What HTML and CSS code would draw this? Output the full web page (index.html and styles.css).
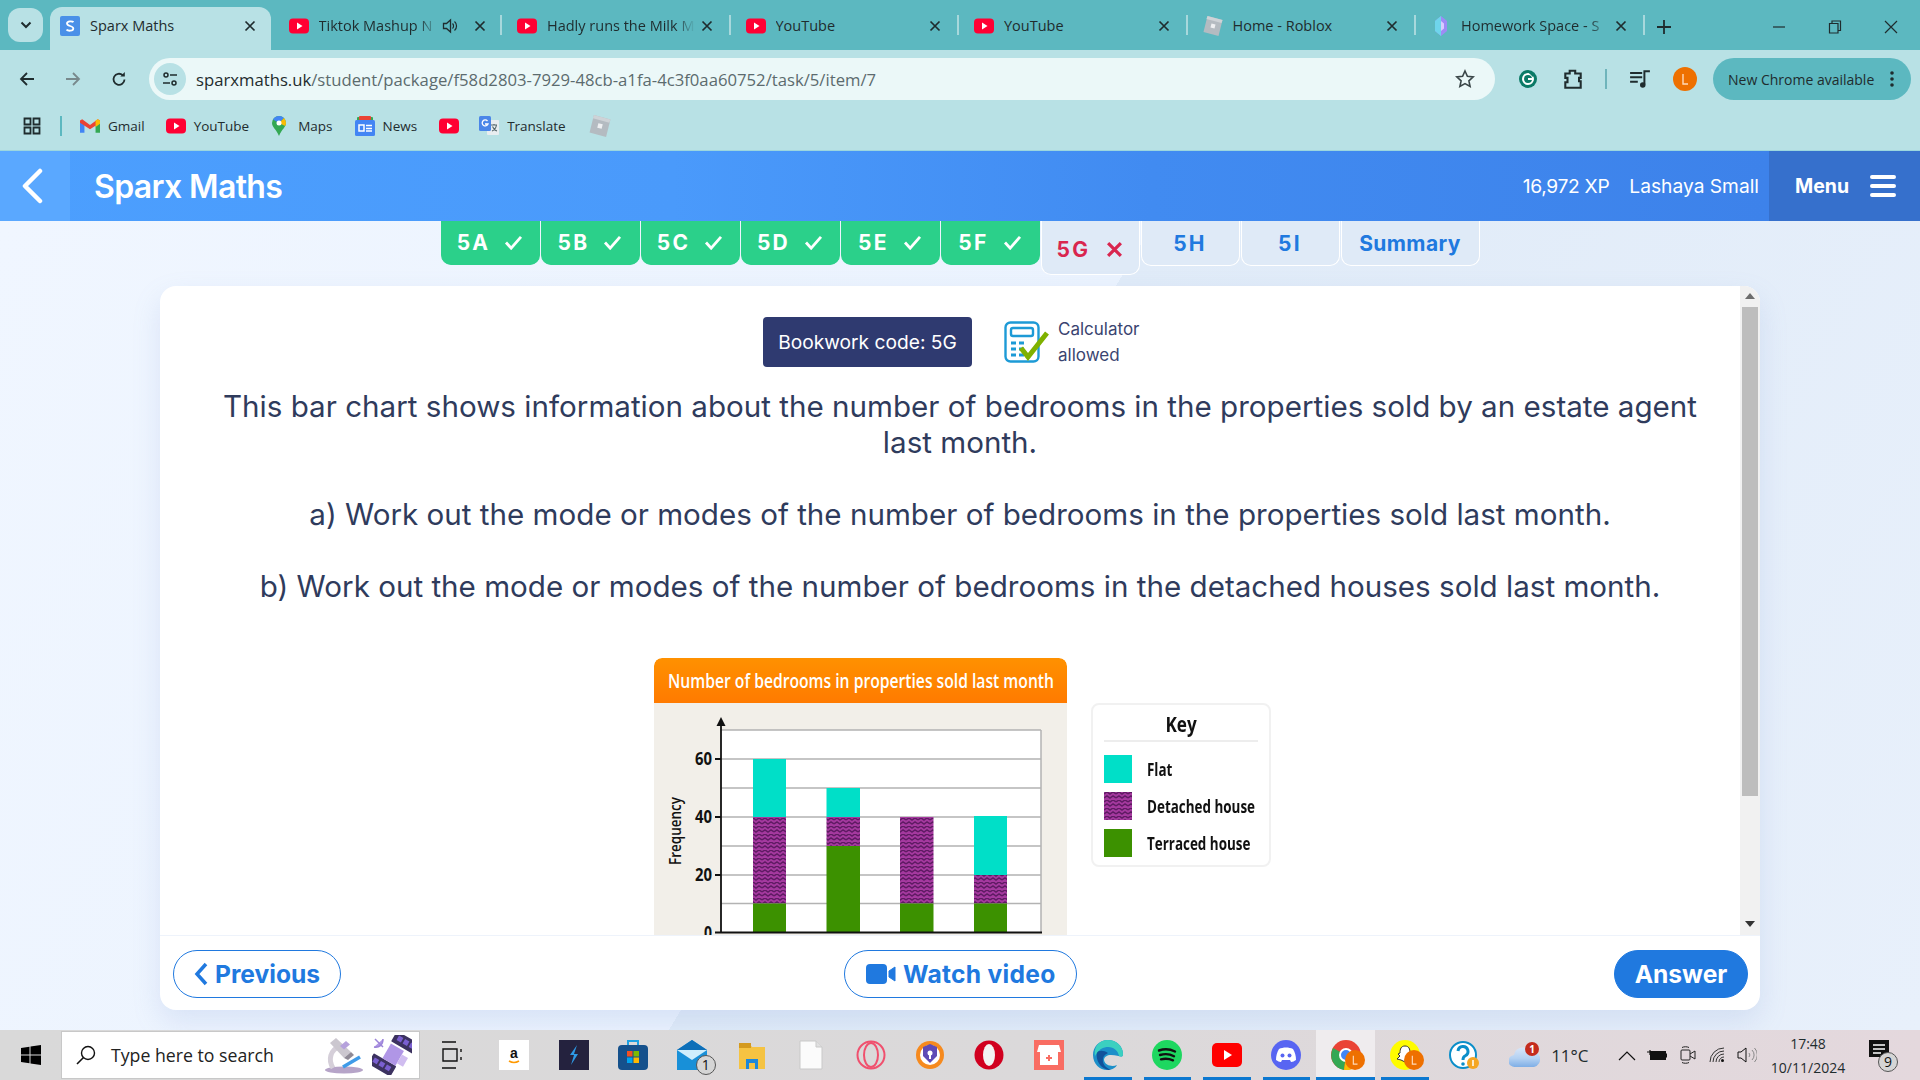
FILE: index.html
```html
<!DOCTYPE html>
<html lang="en">
<head>
<meta charset="utf-8">
<title>Sparx Maths</title>
<link rel="stylesheet" href="styles.css">
</head>
<body>
<svg class="defs" width="0" height="0" aria-hidden="true">
  <defs>
    <symbol id="yt" viewBox="0 0 20 20"><rect y="2.5" width="20" height="15" rx="4" fill="#ff0033"/><path d="M8 6.5l5.5 3.5L8 13.5z" fill="#fff"/></symbol>
    <symbol id="close" viewBox="0 0 12 12"><path d="M1.5 1.5l9 9M10.5 1.5l-9 9" stroke="#1f2c2e" stroke-width="1.7" fill="none"/></symbol>
    <symbol id="roblox" viewBox="0 0 20 20"><path d="M4.500 0l15 4-4 16L.5 16z" fill="#b4bbc1"/><path d="M4.500 0l15 4-1 3-15-4z" fill="#ced3d7"/><path d="M8.500 7.500l4 1-1 4-4-1z" fill="#eef0f2"/></symbol>
    <symbol id="avatar" viewBox="0 0 24 24"><circle cx="12" cy="12" r="12" fill="#ee7000"/><path d="M10 7v10h5" stroke="#ffd9b8" stroke-width="1.4" fill="none"/></symbol>
    <symbol id="tick" viewBox="0 0 20 16"><path d="M2 8l5.500 6L18 2" fill="none" stroke="#fff" stroke-width="3"/></symbol>
    <pattern id="zig" width="12" height="8" patternUnits="userSpaceOnUse"><rect width="12" height="8" fill="#a5399f"/><path d="M0 2l3-2 3 2 3-2 3 2M0 6l3-2 3 2 3-2 3 2" stroke="#5f1a63" stroke-width="1.5" fill="none"/></pattern>
    <linearGradient id="cloud" x1="0" y1="0" x2="0" y2="1"><stop offset="0" stop-color="#d8e6f8"/><stop offset="0.55" stop-color="#b4d1f2"/><stop offset="1" stop-color="#7eaee6"/></linearGradient>
  </defs>
</svg>

<header class="tabstrip">
  <button class="tab-search"><svg width="12" height="8" viewBox="0 0 12 8"><path d="M1.5 1.5L6 6l4.5-4.5" stroke="#1f2c2e" stroke-width="2" fill="none"/></svg></button>
  <div class="tab tab-active">
    <svg class="fav" viewBox="0 0 20 20"><rect width="20" height="20" rx="2" fill="#4a90e8"/><path d="M13.5 6.2C12.5 5 7 4.6 7 7.5c0 3 6.3 2 6.3 5 0 3-5.600 2.500-6.800 1.200" stroke="#fff" stroke-width="1.800" fill="none"/></svg>
    <span class="tab-title">Sparx Maths</span>
    <svg class="tab-x"><use href="#close"/></svg>
  </div>
  <div class="tab tab-audio">
    <svg class="fav"><use href="#yt"/></svg>
    <span class="tab-title">Tiktok Mashup N</span>
    <svg class="tab-sound" viewBox="0 0 16 16"><path d="M1.500 5.500h3L8.500 2v12l-4-3.500h-3z" fill="none" stroke="#1f2c2e" stroke-width="1.300"/><path d="M10.500 5.500a3.500 3.500 0 0 1 0 5M12.500 3.500a6 6 0 0 1 0 9" fill="none" stroke="#1f2c2e" stroke-width="1.200"/></svg>
    <svg class="tab-x"><use href="#close"/></svg>
  </div>
  <div class="tab">
    <svg class="fav"><use href="#yt"/></svg>
    <span class="tab-title">Hadly runs the Milk M</span>
    <svg class="tab-x"><use href="#close"/></svg>
  </div>
  <div class="tab">
    <svg class="fav"><use href="#yt"/></svg>
    <span class="tab-title tab-plain">YouTube</span>
    <svg class="tab-x"><use href="#close"/></svg>
  </div>
  <div class="tab">
    <svg class="fav"><use href="#yt"/></svg>
    <span class="tab-title tab-plain">YouTube</span>
    <svg class="tab-x"><use href="#close"/></svg>
  </div>
  <div class="tab">
    <svg class="fav"><use href="#roblox"/></svg>
    <span class="tab-title tab-plain">Home - Roblox</span>
    <svg class="tab-x"><use href="#close"/></svg>
  </div>
  <div class="tab">
    <svg class="fav" viewBox="0 0 20 20"><path d="M10 0l6 5v10l-6 5-6-5V5z" fill="#9d8bf5"/><path d="M10 0v20L4 15V5z" fill="#6fd5ec"/><path d="M10 5l3 2.500v5L10 15z" fill="#d8ccff"/></svg>
    <span class="tab-title">Homework Space - S</span>
    <svg class="tab-x"><use href="#close"/></svg>
  </div>
  <svg class="new-tab" viewBox="0 0 14 14"><path d="M7 0v14M0 7h14" stroke="#1f2c2e" stroke-width="1.800"/></svg>
  <div class="win-controls">
    <svg viewBox="0 0 14 14"><path d="M1 7h12" stroke="#1f2c2e" stroke-width="1.200"/></svg>
    <svg viewBox="0 0 14 14"><path d="M1.500 3.500h8.500v9.500H1.500zM4 3.500V1h8.500v9.500H10" fill="none" stroke="#1f2c2e" stroke-width="1.200"/></svg>
    <svg viewBox="0 0 14 14"><path d="M1 1l12 12M13 1L1 13" stroke="#1f2c2e" stroke-width="1.200"/></svg>
  </div>
</header>

<div class="toolbar">
  <svg class="nav-ic" viewBox="0 0 16 16"><path d="M15 8H2M8 2L2 8l6 6" fill="none" stroke="#1f2c2e" stroke-width="1.800"/></svg>
  <svg class="nav-ic" viewBox="0 0 16 16"><path d="M1 8h13M8 2l6 6-6 6" fill="none" stroke="#78898c" stroke-width="1.800"/></svg>
  <svg class="nav-ic" viewBox="0 0 16 16"><path d="M13.500 8.500a5.500 5.500 0 1 1-1.800-4.300" fill="none" stroke="#1f2c2e" stroke-width="1.800"/><path d="M13.800 1v4.500H9.300z" fill="#1f2c2e"/></svg>
  <div class="omnibox">
    <span class="site-info"><svg width="16" height="16" viewBox="0 0 16 16"><circle cx="4" cy="4" r="2" fill="none" stroke="#1f2c2e" stroke-width="1.500"/><path d="M8 4h7M1 12h7" stroke="#1f2c2e" stroke-width="1.500"/><circle cx="12" cy="12" r="2" fill="none" stroke="#1f2c2e" stroke-width="1.500"/></svg></span>
    <span class="url"><span class="url-host">sparxmaths.uk</span>/student/package/f58d2803-7929-48cb-a1fa-4c3f0aa60752/task/5/item/7</span>
    <svg class="star" viewBox="0 0 20 20"><path d="M10 2l2.400 5.300 5.800.6-4.300 3.900 1.200 5.700-5.100-2.900-5.100 2.900 1.200-5.700L1.800 7.900l5.800-.6z" fill="none" stroke="#3a4648" stroke-width="1.600"/></svg>
  </div>
  <svg class="tool-g" viewBox="0 0 20 20"><circle cx="10" cy="10" r="9" fill="#0b7a66"/><circle cx="10" cy="10" r="5" fill="none" stroke="#fff" stroke-width="2"/><path d="M10 10h5" stroke="#fff" stroke-width="2"/><path d="M12 3l4 4" stroke="#0b7a66" stroke-width="3"/></svg>
  <svg class="tool-ext" viewBox="0 0 20 20"><path d="M3 5h4V2.500h5V5h5v4h-1.500v3H17v6H3v-5h2V9H3z" fill="none" stroke="#1f2c2e" stroke-width="1.900"/></svg>
  <span class="tool-sep"></span>
  <svg class="tool-media" viewBox="0 0 20 20"><path d="M1 4.500h11M1 8.500h11M1 12.500h7" stroke="#1f2c2e" stroke-width="1.800"/><path d="M14 15V3h5" fill="none" stroke="#1f2c2e" stroke-width="1.800"/><circle cx="12.500" cy="15.500" r="2.500" fill="#1f2c2e"/></svg>
  <svg class="tool-avatar"><use href="#avatar"/></svg>
  <div class="update-pill"><span>New Chrome available</span><svg width="4" height="16" viewBox="0 0 4 16"><circle cx="2" cy="2" r="1.800" fill="#1f2c2e"/><circle cx="2" cy="8" r="1.800" fill="#1f2c2e"/><circle cx="2" cy="14" r="1.800" fill="#1f2c2e"/></svg></div>
</div>

<nav class="bookmarks">
  <svg class="bm-apps" viewBox="0 0 18 18"><path d="M1.500 1.500h6v6h-6zM10.500 1.500h6v6h-6zM1.500 10.500h6v6h-6zM10.500 10.500h6v6h-6z" fill="none" stroke="#1f2c2e" stroke-width="1.800"/></svg>
  <span class="bm-sep"></span>
  <span class="bm"><svg viewBox="0 0 18 14"><path d="M0 3v10h4V6z" fill="#4285f4"/><path d="M18 3v10h-4V6z" fill="#34a853"/><path d="M0 2l2-1 7 5 7-5 2 1v2l-9 6-9-6z" fill="#ea4335"/><path d="M14 2l2-1 2 1v3l-4 3z" fill="#fbbc04"/></svg>Gmail</span>
  <span class="bm bm-yt"><svg><use href="#yt"/></svg>YouTube</span>
  <span class="bm bm-maps"><svg viewBox="0 0 14 20"><path d="M7 0a7 7 0 0 1 7 7c0 4-4 6-7 13-3-7-7-9-7-13a7 7 0 0 1 7-7z" fill="#34a853"/><path d="M1 3.500A7 7 0 0 1 7 0a7 7 0 0 1 5 2L7 7z" fill="#4285f4"/><path d="M12 2a7 7 0 0 1 2 5c0 1-.3 2-.8 3L7 7z" fill="#fbbc04"/><circle cx="7" cy="7" r="2.500" fill="#fff"/></svg>Maps</span>
  <span class="bm bm-news"><svg viewBox="0 0 20 20"><rect x="2" y="1" width="16" height="6" rx="1" fill="#34a853"/><rect x="4" y="0" width="12" height="4" rx="1" fill="#ea4335"/><rect y="4" width="20" height="16" rx="1.500" fill="#4285f4"/><path d="M4 9h5v6H4zM11 9.500h6M11 12.500h6M11 15h6" stroke="#fff" stroke-width="1.500" fill="none"/></svg>News</span>
  <span class="bm bm-only"><svg class="bm-solo"><use href="#yt"/></svg></span>
  <span class="bm"><svg viewBox="0 0 20 20"><rect x="8" y="4" width="12" height="15" rx="1" fill="#e8edf0"/><rect width="12" height="15" rx="1.500" fill="#4a86e8"/><path d="M8.500 5a3 3 0 1 0 .5 3H6" stroke="#fff" stroke-width="1.300" fill="none"/><path d="M12 9h6M15 8v1M13 15c3-1 4-3 4.500-6M13.500 10.500c1 2 2.500 4 4.500 4.500" stroke="#56686c" stroke-width="1.100" fill="none"/></svg>Translate</span>
  <svg class="bm-roblox"><use href="#roblox"/></svg>
</nav>

<header class="app-header">
  <a class="back-btn"><svg width="24" height="36" viewBox="0 0 24 36"><path d="M20 3L5 18l15 15" fill="none" stroke="#fff" stroke-width="4.500" stroke-linecap="round" stroke-linejoin="round"/></svg></a>
  <span class="brand">Sparx Maths</span>
  <span class="xp">16,972 XP</span>
  <span class="user">Lashaya Small</span>
  <div class="menu-btn"><span>Menu</span>
    <svg width="26" height="24" viewBox="0 0 26 24"><path d="M2 3h22M2 12h22M2 21h22" stroke="#fff" stroke-width="4" stroke-linecap="round"/></svg>
  </div>
</header>

<main class="page">
  <div class="task-tabs">
    <div class="ttab ttab-done">5A<svg><use href="#tick"/></svg></div>
    <div class="ttab ttab-done">5B<svg><use href="#tick"/></svg></div>
    <div class="ttab ttab-done">5C<svg><use href="#tick"/></svg></div>
    <div class="ttab ttab-done">5D<svg><use href="#tick"/></svg></div>
    <div class="ttab ttab-done">5E<svg><use href="#tick"/></svg></div>
    <div class="ttab ttab-done">5F<svg><use href="#tick"/></svg></div>
    <div class="ttab ttab-current">5G<svg viewBox="0 0 16 16"><path d="M2 2l12 12M14 2L2 14" fill="none" stroke="#d9264f" stroke-width="3"/></svg></div>
    <div class="ttab">5H</div>
    <div class="ttab">5I</div>
    <div class="ttab ttab-summary">Summary</div>
  </div>

  <section class="card">
    <div class="card-scroll">
      <div class="badges">
        <div class="bookwork">Bookwork code: 5G</div>
        <svg class="calc" viewBox="0 0 45 42"><rect x="1.500" y="1.500" width="33" height="39" rx="5" fill="none" stroke="#1d9ad6" stroke-width="2.400"/><rect x="7" y="7" width="22" height="8" rx="2" fill="none" stroke="#1d9ad6" stroke-width="2.400"/><path d="M7 22h5M15 22h5M7 28h5M15 28h5M7 34h5M15 34h5" stroke="#1d9ad6" stroke-width="2.800"/><path d="M17 27l7 9L43 12" fill="none" stroke="#7fb100" stroke-width="5"/></svg>
        <div class="calc-text">Calculator<br>allowed</div>
      </div>
      <p class="q">This bar chart shows information about the number of bedrooms in the properties sold by an estate agent last month.</p>
      <p class="q">a) Work out the mode or modes of the number of bedrooms in the properties sold last month.</p>
      <p class="q">b) Work out the mode or modes of the number of bedrooms in the detached houses sold last month.</p>

      <div class="figure">
        <svg class="chart" width="413" height="300" viewBox="0 0 413 300">
          <rect y="45" width="413" height="255" fill="#f2efe9"/>
          <defs><linearGradient id="orange" x1="0" y1="0" x2="0" y2="1"><stop offset="0" stop-color="#ff9100"/><stop offset="1" stop-color="#ff7a00"/></linearGradient></defs>
          <path d="M0 45V8a8 8 0 0 1 8-8h397a8 8 0 0 1 8 8v37z" fill="url(#orange)"/>
          <text class="c-title" x="14" y="30" textLength="386" lengthAdjust="spacingAndGlyphs">Number of bedrooms in properties sold last month</text>
          <rect x="67" y="72" width="320" height="202" fill="#fff"/>
          <path class="c-grid" d="M67 72h320M67 101h320M67 130h320M67 159h320M67 188h320M67 217h320M67 245.500h320M387 72v202"/>
          <rect x="99" y="101" width="33" height="58" fill="#00dfc8"/><rect x="99" y="159" width="33" height="86.500" fill="url(#zig)"/><rect x="99" y="245.500" width="33" height="29" fill="#3c9100"/>
          <rect x="172.500" y="130" width="33.500" height="29" fill="#00dfc8"/><rect x="172.500" y="159" width="33.500" height="29" fill="url(#zig)"/><rect x="172.500" y="188" width="33.500" height="86.500" fill="#3c9100"/>
          <rect x="246" y="159" width="33.500" height="86.500" fill="url(#zig)"/><rect x="246" y="245.500" width="33.500" height="29" fill="#3c9100"/>
          <rect x="320" y="158" width="33" height="59" fill="#00dfc8"/><rect x="320" y="217" width="33" height="28.500" fill="url(#zig)"/><rect x="320" y="245.500" width="33" height="29" fill="#3c9100"/>
          <path class="c-axis" d="M67 66v208.500h321M61 101h6M61 159h6M61 217h6M61 274.500h6"/>
          <path d="M67 59l-4.500 9h9z" fill="#111"/>
          <text class="c-tick" x="58" y="107" text-anchor="end" textLength="17" lengthAdjust="spacingAndGlyphs">60</text>
          <text class="c-tick" x="58" y="165" text-anchor="end" textLength="17" lengthAdjust="spacingAndGlyphs">40</text>
          <text class="c-tick" x="58" y="223" text-anchor="end" textLength="17" lengthAdjust="spacingAndGlyphs">20</text>
          <text class="c-tick" x="58" y="281" text-anchor="end" textLength="8" lengthAdjust="spacingAndGlyphs">0</text>
          <text class="c-axis-label" transform="translate(27 207) rotate(-90)" textLength="68" lengthAdjust="spacingAndGlyphs">Frequency</text>
        </svg>
        <aside class="key">
          <div class="key-title"><span class="key-title-text">Key</span></div>
          <div class="key-row"><span class="swatch swatch-flat"></span><span class="key-label">Flat</span></div>
          <div class="key-row"><svg class="swatch" viewBox="0 0 28 28"><rect width="28" height="28" fill="url(#zig)"/></svg><span class="key-label">Detached house</span></div>
          <div class="key-row"><span class="swatch swatch-terr"></span><span class="key-label">Terraced house</span></div>
        </aside>
      </div>

      <div class="scrollbar">
        <svg width="10" height="6" viewBox="0 0 10 6"><path d="M5 0l5 6H0z" fill="#6d6d6d"/></svg>
        <span class="thumb"></span>
        <svg width="10" height="6" viewBox="0 0 10 6"><path d="M5 6L0 0h10z" fill="#333"/></svg>
      </div>
    </div>
    <footer class="card-foot">
      <a class="btn btn-prev"><svg width="14" height="24" viewBox="0 0 14 24"><path d="M12 2L3 12l9 10" fill="none" stroke="#2079df" stroke-width="3.500"/></svg>Previous</a>
      <a class="btn btn-video"><svg width="30" height="20" viewBox="0 0 30 20"><rect width="21" height="20" rx="4" fill="#2079df"/><path d="M23 7l6-4v14l-6-4z" fill="#2079df" stroke="#2079df" stroke-linejoin="round"/></svg>Watch video</a>
      <a class="btn btn-answer">Answer</a>
    </footer>
  </section>
</main>

<footer class="taskbar">
  <div class="tb-start"><svg width="20" height="20" viewBox="0 0 20 20"><path d="M0 3l8.500-1.300V9.500H0zM9.500 1.500L20 0v9.500H9.500zM0 10.500h8.500v7.800L0 17zM9.500 10.500H20V20L9.500 18.500z" fill="#000"/></svg></div>
  <div class="tb-search">
    <svg class="tb-mag" viewBox="0 0 20 20"><circle cx="12" cy="8" r="6.500" fill="none" stroke="#111" stroke-width="1.400"/><path d="M7.500 12.500L1 19" stroke="#111" stroke-width="1.600"/></svg>
    <span class="tb-search-text">Type here to search</span>
    <svg class="tb-art" viewBox="0 0 40 40"><ellipse cx="19" cy="35" rx="19" ry="3.500" fill="#b6a4c8"/><path d="M8 33C3 25 5 15 15 11" fill="none" stroke="#d5cfd9" stroke-width="5"/><path d="M5 8l6-5 15 14-7 6z" fill="#cbc7cf"/><path d="M15 11l6-5 4 3.500-6 5z" fill="#b6a2dc"/><path d="M19 23l7-6 3 3-6 5z" fill="#8f8a96"/><path d="M18 32l17-10" stroke="#3f9be8" stroke-width="3.500"/></svg>
    <svg class="tb-art" viewBox="0 0 40 40"><g transform="rotate(30 21 19)"><rect x="9" y="-4" width="26" height="12" rx="1" fill="#3c3260" transform="translate(4 1)"/><rect x="7" y="29" width="26" height="12" rx="1" fill="#3c3260" transform="translate(-3 -1)"/><rect x="14" y="11" width="15" height="17" fill="#b096e6"/><rect x="29" y="15" width="7" height="10" fill="#d0bdf0"/><g fill="#7a5fd0"><rect x="17" y="0" width="5" height="5"/><rect x="24" y="0" width="5" height="5"/><rect x="31" y="0" width="5" height="5"/><rect x="7" y="31" width="5" height="5"/><rect x="14" y="31" width="5" height="5"/><rect x="21" y="31" width="5" height="5"/></g></g><path d="M3 4l8 8M2 12c5 1 9-2 9-8" fill="#b096e6" stroke="#9c84d8" stroke-width="1.500"/></svg>
  </div>
  <div class="tb-cell tb-taskview"><svg width="20" height="30" viewBox="0 0 20 30"><path d="M0 2h14M0 28h14M1 9h14v12H1zM19 9v3M19 17v3" fill="none" stroke="#111" stroke-width="1.400"/></svg></div>
  <div class="tb-cell"><svg class="tb-ic" viewBox="0 0 30 30"><rect width="30" height="30" fill="#fff"/><text class="amz" x="15" y="18" text-anchor="middle">a</text><path d="M10 21q5 3 10 0" stroke="#f90" stroke-width="1.500" fill="none"/></svg></div>
  <div class="tb-cell"><svg class="tb-ic" viewBox="0 0 30 30"><rect width="30" height="30" fill="#24223e"/><path d="M18 5l-7 10h4l-3 10 7-11h-4z" fill="#2e9ae6"/></svg></div>
  <div class="tb-cell"><svg class="tb-ic" viewBox="0 0 30 30"><path d="M10 5V1h10v4" fill="none" stroke="#1da1e2" stroke-width="2"/><rect y="5" width="30" height="25" rx="4" fill="#15518c"/><rect x="9" y="11" width="5.500" height="5.500" fill="#f25022"/><rect x="15.500" y="11" width="5.500" height="5.500" fill="#7fba00"/><rect x="9" y="17.500" width="5.500" height="5.500" fill="#00a4ef"/><rect x="15.500" y="17.500" width="5.500" height="5.500" fill="#ffb900"/></svg></div>
  <div class="tb-cell tb-badged"><svg class="tb-ic" viewBox="0 0 30 30"><path d="M0 10L15 0l15 10v20H0z" fill="#1890d8"/><path d="M0 10l15 10 15-10-15-3z" fill="#cfeefc"/><path d="M15 0L0 10h30z" fill="#0e6fb8"/></svg><span class="count">1</span></div>
  <div class="tb-cell"><svg class="tb-ic" viewBox="0 0 30 30"><path d="M2 3h10l3 4h13v22H2z" fill="#f5c342"/><path d="M2 3h12v5H2z" fill="#d49a1e"/><path d="M9 19h12v10h-3v-6h-6v6H9z" fill="#1e88d8"/></svg></div>
  <div class="tb-cell"><svg class="tb-ic" viewBox="0 0 30 30"><path d="M4 1h16l6 6v22H4z" fill="#fbfbfb" stroke="#c9c9c9"/><path d="M20 1v6h6" fill="#e0e0e0" stroke="#c9c9c9"/></svg></div>
  <div class="tb-cell"><svg class="tb-ic" viewBox="0 0 30 30"><circle cx="15" cy="15" r="13.500" fill="none" stroke="#f0506e" stroke-width="2"/><ellipse cx="15" cy="15" rx="7" ry="12" fill="none" stroke="#f0506e" stroke-width="2"/></svg></div>
  <div class="tb-cell"><svg class="tb-ic" viewBox="0 0 30 30"><circle cx="15" cy="15" r="14" fill="#f68a1e"/><circle cx="15" cy="15" r="10" fill="#fff"/><path d="M8 7l7-3 7 3v9l-7 7-7-7z" fill="#5f4bb6"/><circle cx="15" cy="13" r="2.500" fill="#fff"/><path d="M15 14v5" stroke="#fff" stroke-width="2"/></svg></div>
  <div class="tb-cell"><svg class="tb-ic" viewBox="0 0 30 30"><circle cx="15" cy="15" r="14.500" fill="#d1001f"/><ellipse cx="15" cy="15" rx="6" ry="11" fill="#f2f2f2"/></svg></div>
  <div class="tb-cell"><svg class="tb-ic" viewBox="0 0 30 30"><rect width="30" height="30" fill="#f96d63"/><path d="M5 5h20l2 7H3z" fill="#fff"/><rect x="6" y="12" width="18" height="13" fill="#fff"/><path d="M15 15v6M12 18h6" stroke="#f96d63" stroke-width="2"/></svg></div>
  <div class="tb-cell tb-on"><svg class="tb-ic" viewBox="0 0 30 30"><path d="M15 0C6 0 0 7 0 15c0 9 7 15 14 15 6 0 9-3 10-5-4 2-12 1-13-5 0-3 3-5 7-5 8 0 12 4 12-1C30 6 23 0 15 0z" fill="#1c8fc9"/><path d="M15 0C23 0 30 6 30 14c0 3-2 3-4 2-1-7-9-12-18-7-2 1-6 6-6 8C0 7 6 0 15 0z" fill="#3bd0c0"/><path d="M4 13c-2 9 6 18 14 17-5-2-9-6-8-11 0-3 3-5 5-6-4-3-10-3-11 0z" fill="#12529b"/></svg></div>
  <div class="tb-cell tb-on"><svg class="tb-ic" viewBox="0 0 30 30"><circle cx="15" cy="15" r="15" fill="#1ed760"/><path d="M7 10.500c6-2 11-1.500 16 1M8 15c5-1.500 10-1 14 1.200M9 19.300c4-1 8-.8 12 1" fill="none" stroke="#111" stroke-width="2.400" stroke-linecap="round"/></svg></div>
  <div class="tb-cell tb-on"><svg class="tb-ic" viewBox="0 0 30 30"><rect y="3" width="30" height="24" rx="5" fill="#f00"/><path d="M12 10l8 5-8 5z" fill="#fff"/></svg></div>
  <div class="tb-cell tb-on"><svg class="tb-ic" viewBox="0 0 30 30"><circle cx="15" cy="15" r="15" fill="#5865f2"/><path d="M8 9c4-2 10-2 14 0 2 3 3 7 3 11-2 1-3 2-5 2l-1-2h-8l-1 2c-2 0-3-1-5-2 0-4 1-8 3-11z" fill="#fff"/><circle cx="11.500" cy="15.500" r="2" fill="#5865f2"/><circle cx="18.500" cy="15.500" r="2" fill="#5865f2"/></svg></div>
  <div class="tb-cell tb-on tb-active tb-badged">
    <svg class="tb-ic" viewBox="0 0 30 30"><circle cx="15" cy="15" r="15" fill="#ea4335"/><path d="M15 15L2 8a15 15 0 0 0 11 22z" fill="#34a853"/><path d="M15 15l15-2a15 15 0 0 1-17 17z" fill="#fbbc04"/><circle cx="15" cy="15" r="6" fill="#4285f4" stroke="#fff" stroke-width="2"/></svg>
    <svg class="tb-avatar"><use href="#avatar"/></svg>
  </div>
  <div class="tb-cell tb-on tb-badged">
    <svg class="tb-ic" viewBox="0 0 30 30"><circle cx="15" cy="15" r="15" fill="#fffc00"/><path d="M15 6c4 0 5 3 5 7l2 1-2 2 3 3-4 1-4 2-4-2-4-1 3-3-2-2 2-1c0-4 1-7 5-7z" fill="#fff" stroke="#333"/></svg>
    <svg class="tb-avatar"><use href="#avatar"/></svg>
  </div>
  <div class="tb-cell"><svg class="tb-ic" viewBox="0 0 30 30"><circle cx="14" cy="15" r="13" fill="#fff" stroke="#0b8ec9" stroke-width="2"/><path d="M9 11a5 5 0 1 1 7 5c-2 1-2 2-2 4" fill="none" stroke="#0b8ec9" stroke-width="3"/><circle cx="14" cy="24" r="1.800" fill="#0b8ec9"/><circle cx="24" cy="23" r="6" fill="#f5a623"/><path d="M24 20v6" stroke="#fff" stroke-width="1.500"/></svg></div>
  <div class="tb-weather">
    <svg width="31" height="26" viewBox="0 0 31 26"><path d="M6 25a6 6 0 0 1-1-12 9 9 0 0 1 16-4 8 8 0 0 1 4 16z" fill="url(#cloud)"/><circle cx="23" cy="7" r="7" fill="#c42b1c"/><text class="wx-badge" x="23" y="11" text-anchor="middle">1</text></svg>
    <span>11°C</span>
  </div>
  <div class="tb-tray">
    <svg viewBox="0 0 20 20"><path d="M2 15l8-8 8 8" fill="none" stroke="#111" stroke-width="1.200"/></svg>
    <svg viewBox="0 0 20 20"><path d="M0 7h3M3 5v4M3 7v3" stroke="#111" stroke-width="1.200"/><rect x="3" y="6" width="16" height="9" fill="#111"/><rect x="19" y="8.500" width="1" height="4" fill="#111"/></svg>
    <svg viewBox="0 0 20 20"><rect x="4" y="5" width="9" height="10" rx="1" fill="none" stroke="#222"/><path d="M5 2.500c2-1 5-1 7 0M5 17.500c2 1 5 1 7 0M13 9l5-3v8l-5-3" fill="none" stroke="#222"/></svg>
    <svg viewBox="0 0 20 20"><path d="M3 17a14 14 0 0 1 14-14M6 17a11 11 0 0 1 11-11M9 17a8 8 0 0 1 8-8M12 17a5 5 0 0 1 5-5" fill="none" stroke="#333" stroke-width="1"/><circle cx="15.500" cy="15.500" r="1.500" fill="#111"/></svg>
    <svg viewBox="0 0 20 20"><path d="M1 7h3l5-4v14l-5-4H1z" fill="none" stroke="#111"/><path d="M12 8a3 3 0 0 1 0 4M15 5a7 7 0 0 1 0 10M17.500 3a10 10 0 0 1 0 14" fill="none" stroke="#888"/></svg>
  </div>
  <div class="tb-clock"><span>17:48</span><span>10/11/2024</span></div>
  <div class="tb-notify"><svg width="20" height="20" viewBox="0 0 20 20"><path d="M0 0h20v17h-5l-2 3-2-3H0z" fill="#111"/><path d="M4 5h12M4 9h12M4 13h8" stroke="#fff" stroke-width="1.300"/></svg><span class="count">9</span></div>
</footer>
</body>
</html>
```

FILE: styles.css
```css
* { box-sizing: border-box; }
html, body { margin: 0; height: 1080px; overflow: hidden; }
body { width: 1920px; display: flex; flex-direction: column; font-family: "Open Sans", "Noto Sans", sans-serif; color: #1f2c2e; background: #fff; }
svg { display: block; flex: none; }
.defs { position: absolute; }

/* Browser tab strip */
.tabstrip { height: 50px; flex: none; display: flex; align-items: flex-end; padding-left: 8px; background: #5cb8c0; position: relative; }
.tab-search { width: 35px; height: 34px; margin: 0 7px 8px 0; padding: 0; border: 0; border-radius: 12px; background: #b8e1e5; display: flex; align-items: center; justify-content: center; }
.tab { width: 228.5px; height: 43px; display: flex; align-items: center; padding: 0 18px 6px 13px; border-right: 2px solid transparent; position: relative; }
.tab::after { content: ""; position: absolute; right: 0; top: 8px; height: 20px; width: 2px; background: #a8d8dc; }
.tab-audio { padding-right: 16px; }
.tab-active { width: 221px; margin-right: 4.500px; padding: 0 13px 6px 10px; background: #b8e1e5; border-radius: 12px 12px 0 0; }
.tab-active::after { display: none; }
.fav { width: 20px; height: 20px; margin-right: 10px; }
.tab-title { flex: 1; min-width: 0; font-size: 14.500px; white-space: nowrap; overflow: hidden; -webkit-mask-image: linear-gradient(to left, transparent 0, #000 20px); mask-image: linear-gradient(to left, transparent 0, #000 20px); }
.tab-active .tab-title, .tab-plain { -webkit-mask-image: none; mask-image: none; }
.tab-sound { width: 16px; height: 16px; margin: 0 10px 0 4px; }
.tab-x { width: 12px; height: 12px; margin-left: 6px; }
.new-tab { width: 14px; height: 14px; margin: 0 0 16px 10px; }
.win-controls { margin-left: auto; display: flex; gap: 42px; padding: 0 22px 16px 0; }
.win-controls svg { width: 14px; height: 14px; }

/* Toolbar */
.toolbar { height: 58px; flex: none; display: flex; align-items: center; padding: 0 8px 0 19px; background: #b8e1e5; }
.nav-ic { width: 16px; height: 16px; margin-right: 30px; }
.omnibox { width: 1346px; height: 42px; margin-left: -8px; border-radius: 21px; background: #ebf8f8; display: flex; align-items: center; padding: 0 20px 0 5px; }
.site-info { width: 32px; height: 32px; border-radius: 50%; background: #b8e1e5; display: flex; align-items: center; justify-content: center; margin-right: 10px; }
.url { flex: 1; font-size: 16.700px; color: #5c6b6e; white-space: nowrap; }
.url-host { color: #1f2c2e; }
.star { width: 20px; height: 20px; }
.tool-g { width: 20px; height: 20px; margin-left: 23px; }
.tool-ext { width: 22px; height: 22px; margin-left: 24px; }
.tool-sep { width: 2px; height: 20px; background: #6fb4bb; margin-left: 21px; }
.tool-media { width: 22px; height: 22px; margin-left: 22px; }
.tool-avatar { width: 24px; height: 24px; margin-left: 22px; }
.update-pill { width: 198px; height: 42px; margin-left: 16px; border-radius: 21px; background: #5cb8c0; display: flex; align-items: center; justify-content: space-between; padding: 0 17px 0 15px; font-size: 14px; white-space: nowrap; }

/* Bookmarks */
.bookmarks { height: 43px; flex: none; display: flex; align-items: center; padding: 0 0 7px 23px; background: #b8e1e5; border-bottom: 1px solid #9cd6de; font-size: 13.500px; }
.bm-apps { width: 18px; height: 18px; }
.bm-sep { width: 2px; height: 20px; background: #5cb8c0; margin: 0 18px 0 19px; }
.bm { display: flex; align-items: center; margin-right: 21px; white-space: nowrap; }
.bm svg { width: 20px; height: 20px; margin-right: 8px; }
.bm svg.bm-solo { margin-right: 0; }
.bm-yt { margin-right: 23px; }
.bm-maps { margin-right: 22px; }
.bm-maps svg { width: 14px; margin-right: 12px; }
.bm-news { margin-right: 22px; }
.bm-only { margin-right: 20px; }
.bm-roblox { width: 22px; height: 22px; margin-left: 2px; }

/* App header */
.app-header { height: 70px; flex: none; display: flex; align-items: center; color: #fff; background: linear-gradient(90deg, #4c9ffe 0%, #4a9afb 35%, #418bf1 60%, #3d82ea 92%); }
.back-btn { width: 70px; height: 70px; background: #5aa8ff; display: flex; align-items: center; padding-left: 20px; }
.brand { font-family: Inter, sans-serif; font-size: 32px; font-weight: 600; letter-spacing: -0.650px; margin-left: 24px; }
.xp { margin-left: auto; font-family: Inter, sans-serif; font-size: 19.200px; letter-spacing: -0.300px; }
.user { margin-left: 20px; font-family: Inter, sans-serif; font-size: 19.200px; }
.menu-btn { width: 151px; height: 70px; margin-left: 10px; background: #3670cc; display: flex; align-items: center; gap: 21px; padding-left: 26px; font-family: Inter, sans-serif; font-weight: 700; font-size: 19.500px; }

/* Page */
.page { flex: 1; min-height: 0; display: flex; flex-direction: column; background: linear-gradient(121deg, #f0f6ff 0, #ebf3fe 990px, #e0ebf8 990px, #e8f0fb 100%); }
.task-tabs { height: 65px; flex: none; display: flex; justify-content: center; align-items: flex-start; gap: 1px; font-family: Inter, sans-serif; }
.ttab { width: 99px; height: 45px; display: flex; align-items: center; justify-content: center; gap: 14px; background: #dfeaf7; border: 1px solid #fff; border-top: 0; border-radius: 0 0 10px 10px; color: #2079df; font-size: 21px; font-weight: 700; letter-spacing: 2.300px; }
.ttab svg { width: 19px; height: 15px; }
.ttab-done { height: 44px; background: #2bd08a; border-color: #2bd08a; color: #fff; }
.ttab-current { height: 54px; color: #d9264f; padding-top: 3px; gap: 16px; }
.ttab-current svg { width: 17px; height: 17px; }
.ttab-summary { width: 139px; letter-spacing: 0.400px; }
.card { width: 1600px; flex: none; height: 724px; margin: 0 auto; display: flex; flex-direction: column; background: #fff; border-radius: 16px; box-shadow: 0 12px 28px rgba(120, 150, 210, 0.18); overflow: hidden; }
.card-scroll { flex: 1; min-height: 0; position: relative; overflow: hidden; padding-top: 31px; }
.badges { height: 50px; display: flex; align-items: center; padding-left: 603px; }
.bookwork { width: 209px; height: 50px; border-radius: 4px; background: #2f3a70; color: #fff; display: flex; align-items: center; justify-content: center; font-family: Inter, sans-serif; font-size: 19.200px; }
.calc { width: 45px; height: 42px; margin-left: 32px; }
.calc-text { margin-left: 9px; font-family: Inter, sans-serif; font-size: 17px; line-height: 26px; color: #3a4470; }
.q { width: 1500px; margin: 0 auto 36px; text-align: center; font-family: Inter, sans-serif; font-size: 29.600px; line-height: 36px; color: #2f3b5c; }
.q:first-of-type { margin-top: 21px; }
.figure { display: flex; align-items: flex-start; margin: 54px 0 0 494px; }
.chart { border-radius: 8px 8px 0 0; }
.c-title { font: 600 20px "Open Sans", sans-serif; fill: #fff; }
.c-grid { fill: none; stroke: #b3b3b3; stroke-width: 1.500; }
.c-axis { fill: none; stroke: #111; stroke-width: 1.800; }
.c-tick { font: 700 18px "Open Sans", sans-serif; fill: #111; }
.c-axis-label { font: 600 17px "Open Sans", sans-serif; fill: #111; }
.key { width: 180px; height: 164px; margin: 45px 0 0 24px; border: 2px solid #f1f1f1; border-radius: 8px; padding: 0 11px; }
.key-title { height: 37px; margin-bottom: 13px; border-bottom: 2px solid #ededed; text-align: center; font: 700 22px/36px "Open Sans", sans-serif; color: #111; }
.key-title-text { display: inline-block; transform: scaleX(0.78); }
.key-row { height: 28px; margin-bottom: 9px; display: flex; align-items: center; gap: 15px; }
.swatch { display: block; width: 28px; height: 28px; flex: none; }
.swatch-flat { background: #00dfc8; }
.swatch-terr { background: #3c9100; }
.key-label { display: block; width: 108px; font: 700 17px "Open Sans", sans-serif; color: #111; white-space: nowrap; transform: scaleX(0.79); transform-origin: left center; }
.scrollbar { position: absolute; top: 0; right: 0; bottom: 0; width: 20px; display: flex; flex-direction: column; align-items: center; padding: 7px 0 8px; background: #f1f1f1; }
.thumb { width: 16px; height: 489px; margin: 8px 0 auto; background: #bdbdbd; }
.card-foot { height: 75px; flex: none; display: grid; grid-template-columns: 1fr auto 1fr; align-items: center; padding: 1px 12px 0 13px; border-top: 1px solid #eef3fb; font-family: Inter, sans-serif; }
.btn { height: 48px; display: inline-flex; align-items: center; border-radius: 24px; font-size: 24.600px; font-weight: 700; color: #2079df; border: 1px solid #2079df; white-space: nowrap; }
.btn-prev { width: 168px; justify-self: start; gap: 7px; padding-left: 20px; }
.btn-video { width: 233px; gap: 7px; padding-left: 21px; letter-spacing: 0.300px; }
.btn-answer { width: 134px; justify-self: end; justify-content: center; color: #fff; background: #2079df; }

/* Taskbar */
.taskbar { height: 50px; flex: none; display: flex; align-items: center; background: linear-gradient(90deg, #d9d9d9 0%, #dbd9da 55%, #e4d8dd 100%); }
.tb-start { width: 61px; display: flex; justify-content: center; }
.tb-search { width: 359px; height: 48px; display: flex; align-items: center; padding-left: 14px; background: #fff; border: 1px solid #c8c8c8; }
.tb-mag { width: 20px; height: 20px; }
.tb-search-text { flex: 1; margin-left: 15px; font-size: 17.700px; color: #222; }
.tb-art { width: 40px; height: 40px; margin-right: 7px; }
.tb-cell { width: 59.400px; height: 50px; display: flex; align-items: center; justify-content: center; position: relative; }
.tb-taskview { width: 64.500px; }
.tb-ic { width: 30px; height: 30px; }
.amz { font: 700 14px "Liberation Sans", sans-serif; fill: #111; }
.tb-on::after { content: ""; position: absolute; left: 6px; right: 6px; bottom: 0; height: 3px; background: #0c78d0; }
.tb-active { background: #efecee; }
.tb-active::after { left: 0; right: 0; }
.count { position: absolute; left: 33px; top: 25px; width: 20px; height: 20px; border-radius: 50%; border: 1px solid #555; background: #d5d5d5; font-size: 14px; line-height: 18px; text-align: center; color: #111; }
.tb-avatar { position: absolute; left: 29px; top: 20px; width: 20px; height: 20px; }
.tb-weather { display: flex; align-items: center; gap: 11px; margin-left: 15px; font-size: 17px; }
.wx-badge { font: 700 10px "Open Sans", sans-serif; fill: #fff; }
.tb-tray { margin-left: auto; display: flex; align-items: center; gap: 10px; }
.tb-tray svg { width: 20px; height: 20px; }
.tb-clock { width: 86px; margin-left: 8px; display: flex; flex-direction: column; align-items: center; gap: 5px; font-size: 14px; line-height: 19px; }
.tb-notify { margin-left: 18px; width: 51px; position: relative; height: 36px; padding-top: 3px; }
.tb-notify .count { left: 9px; top: 15px; }
```
